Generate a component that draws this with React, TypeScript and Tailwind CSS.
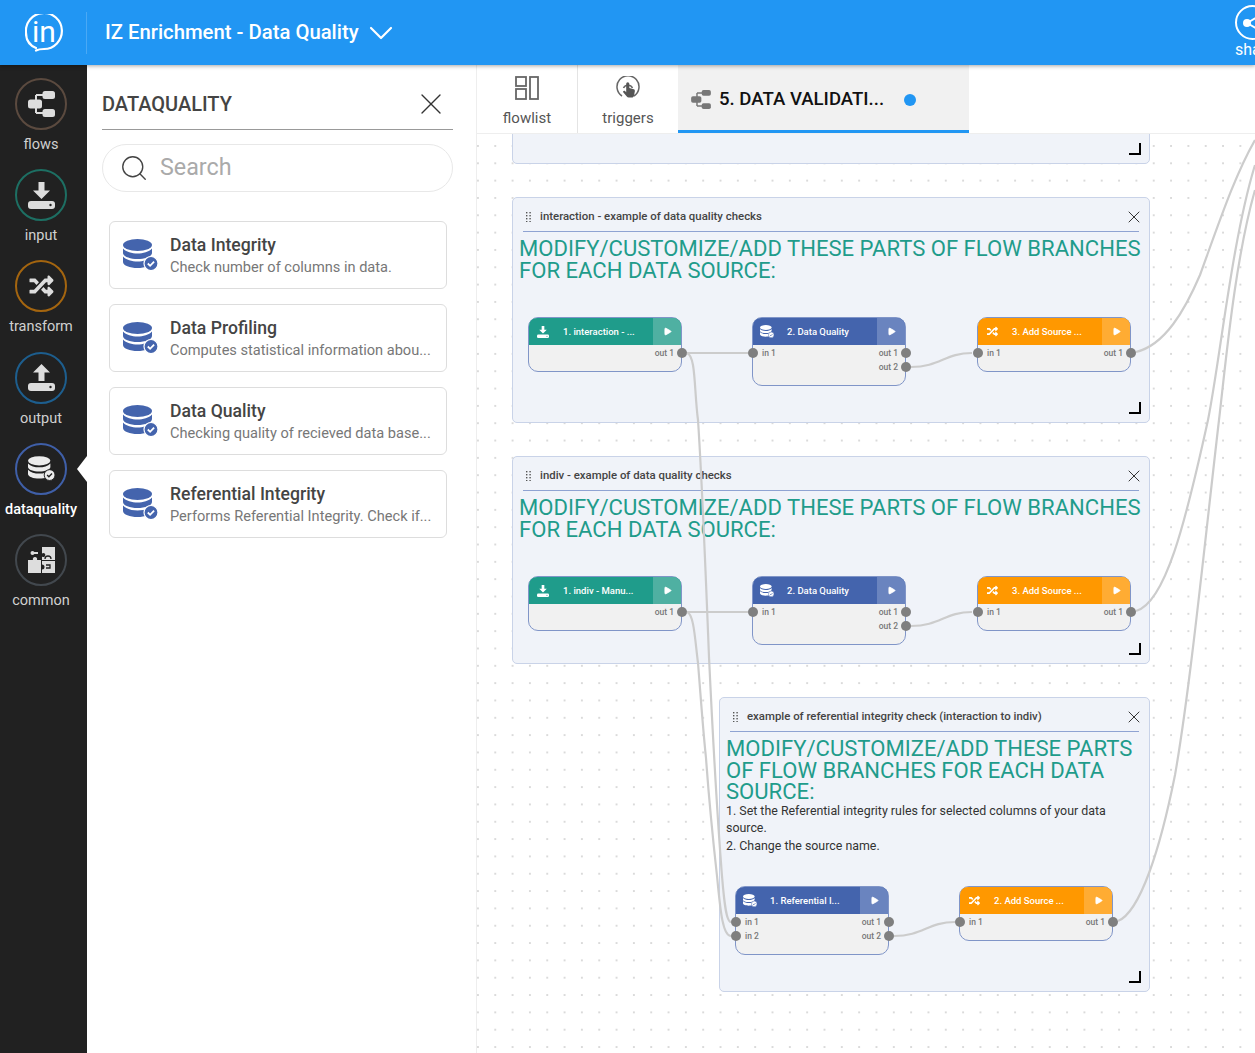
import { ReactNode } from 'react';
import { ChevronDown, Play, Search, X } from 'lucide-react';
import { FaRandom } from 'react-icons/fa';

function FlowIcon({ className, color }: { className: string; color: string }) {
  return (
    <svg viewBox="0 0 27 26" className={className} fill={color}>
      <path d="M8 4h8M8 22h8M8 4v18" stroke={color} strokeWidth="2" fill="none" />
      <rect x="0" y="8.5" width="14" height="9" rx="2.5" />
      <rect x="14.5" y="0" width="12.5" height="8" rx="2.5" />
      <rect x="14.5" y="18" width="12.5" height="8" rx="2.5" />
    </svg>
  );
}

function TransferIcon({ className, color, dark, up }: { className: string; color: string; dark: string; up?: boolean }) {
  return (
    <svg viewBox="0 0 27 27" className={className} fill={color}>
      {up ? <path d="M13.5 0L22 8.5h-5.5V17h-6V8.5H5z" /> : <path d="M10.5 0h6v8.5H22L13.5 17 5 8.5h5.5z" />}
      <rect x="0" y="19" width="27" height="8" rx="3" />
      <circle cx="22.5" cy="23" r="1.2" fill={dark} />
    </svg>
  );
}

function DbIcon({ className, color, ring, tick }: { className: string; color: string; ring: string; tick: string }) {
  return (
    <svg viewBox="0 0 35 32" className={className} fill={color}>
      <ellipse cx="14.5" cy="6" rx="14.5" ry="6" />
      <path d="M0 9.5C3 13 9 14.5 14.5 14.5S26 13 29 9.5V14c0 3.5-7 6-14.5 6S0 17.5 0 14z" />
      <path d="M0 17.5C3 21 9 22.500 14.500 22.500S26 21 29 17.500V23c0 3.500-7 6-14.500 6S0 26.500 0 23z" />
      <circle cx="28" cy="24.500" r="7" stroke={ring} strokeWidth="1.2" />
      <path d="M24.800 24.500l2.300 2.300 4-4.200" stroke={tick} strokeWidth="1.800" fill="none" />
    </svg>
  );
}

function PuzzleIcon({ className }: { className: string }) {
  return (
    <svg viewBox="0 0 27 26" className={className} fill="#dddddd">
      <path d="M14 0h13v13H14V9.500a2 2 0 1 0 0-3z" />
      <path d="M0 13h5a2.200 2.200 0 1 1 4 0h4v13H0z" />
      <path d="M14 14h13v12H14v-3.500a2.200 2.200 0 1 0 0-5z" />
      <path d="M5 6h5" stroke="#dddddd" strokeWidth="2" />
      <circle cx="4.500" cy="6" r="2" />
      <path d="M17 12a3 3 0 0 1 6 0M18 18h4v3h-4" stroke="#212121" strokeWidth="1.300" fill="none" />
    </svg>
  );
}

function DragIcon() {
  return (
    <svg viewBox="0 0 5 10" className="h-[10px] w-[5px] shrink-0" fill="#555555">
      {[0, 3, 6, 9].map((y) => (
        <g key={y}>
          <rect x="0" y={y} width="1.400" height="1.400" />
          <rect x="3.400" y={y} width="1.400" height="1.400" />
        </g>
      ))}
    </svg>
  );
}

const railItems = [
  { label: 'flows', ring: 'border-[#5b4a3f]', icon: <FlowIcon className="h-[26px] w-[27px]" color="#dddddd" /> },
  { label: 'input', ring: 'border-[#1d6f63]', icon: <TransferIcon className="h-[27px] w-[27px]" color="#dddddd" dark="#212121" /> },
  { label: 'transform', ring: 'border-[#a4650f]', icon: <FaRandom className="h-[24px] w-[27px] text-[#dddddd]" /> },
  { label: 'output', ring: 'border-[#1d5e8e]', icon: <TransferIcon className="h-[27px] w-[27px]" color="#dddddd" dark="#212121" up /> },
  { label: 'dataquality', ring: 'border-[#3f5fa8]', active: true, icon: <DbIcon className="h-[25px] w-[27px]" color="#ececec" ring="#212121" tick="#212121" /> },
  { label: 'common', ring: 'border-[#42484e]', icon: <PuzzleIcon className="h-[26px] w-[27px]" /> },
];

const cards = [
  { title: 'Data Integrity', text: 'Check number of columns in data.' },
  { title: 'Data Profiling', text: 'Computes statistical information abou...' },
  { title: 'Data Quality', text: 'Checking quality of recieved data base...' },
  { title: 'Referential Integrity', text: 'Performs Referential Integrity. Check if...' },
];

function Node({
  className,
  head,
  play,
  icon,
  title,
  ins,
  outs,
}: {
  className: string;
  head: string;
  play: string;
  icon: ReactNode;
  title: string;
  ins: string[];
  outs: string[];
}) {
  return (
    <div className={`absolute w-[154px] rounded-[10px] border-[1.5px] border-[#8095c8] bg-[#f1f1f1] ${className}`}>
      <div className={`flex h-[27px] items-center rounded-t-[8px] ${head}`}>
        <div className="flex w-[33px] shrink-0 justify-center pr-[5px]">{icon}</div>
        <span className="flex-1 pt-[1px] pl-[1px] text-[9.500px] font-medium whitespace-nowrap text-white">{title}</span>
        <div className={`flex h-full w-[28px] shrink-0 items-center justify-center rounded-tr-[8px] ${play}`}>
          <Play className="h-[9px] w-[9px] fill-white text-white" />
        </div>
      </div>
      <div className="flex justify-between pt-[1px] pr-[7px] pb-[11px] pl-[9px]">
        <div className="flex flex-col">
          {ins.map((n) => (
            <div key={n} className="relative h-[14px] text-[8.500px] leading-[14px] font-medium text-[#777777]">
              {n}
              <span className="absolute top-[2px] left-[-14px] h-[10px] w-[10px] rounded-full bg-[#7f7f7f]" />
            </div>
          ))}
        </div>
        <div className="flex flex-col">
          {outs.map((n) => (
            <div key={n} className="relative h-[14px] text-[8.500px] leading-[14px] font-medium text-[#777777]">
              {n}
              <span className="absolute top-[2px] right-[-13px] h-[10px] w-[10px] rounded-full bg-[#7f7f7f]" />
            </div>
          ))}
        </div>
      </div>
    </div>
  );
}

function Group({
  className,
  title,
  children,
  body,
}: {
  className: string;
  title?: string;
  children?: ReactNode;
  body?: ReactNode;
}) {
  return (
    <div className={`absolute rounded-[5px] border border-[#c9d3e8] bg-[#f0f3f9] ${className}`}>
      {title && (
        <>
          <div className="mx-[10px] flex h-[34px] items-center gap-[9px] border-b border-[#8fa3d2] pt-[4px] pl-[3px]">
            <DragIcon />
            <span className="flex-1 text-[11.400px] font-medium text-[#444444]">{title}</span>
            <X className="mr-[-5px] h-[20px] w-[20px] text-[#222222]" strokeWidth={1.100} />
          </div>
          <div className="px-[6px] pt-[6px] text-[22.080px] leading-[21.500px] text-[#1f9c8b]">
            MODIFY/CUSTOMIZE/ADD THESE PARTS OF FLOW BRANCHES FOR EACH DATA SOURCE:
          </div>
          {body}
        </>
      )}
      {children}
      <div className="absolute right-[8px] bottom-[8px] h-[12px] w-[12px] border-r-2 border-b-2 border-black" />
    </div>
  );
}

const dlIcon = <TransferIcon className="h-[12px] w-[12px]" color="#ffffff" dark="#1f9c8b" />;
const dbIcon = <DbIcon className="h-[13px] w-[14px]" color="#ffffff" ring="#4464ad" tick="#4464ad" />;
const mixIcon = <FaRandom className="h-[11px] w-[13px] text-white" />;
const teal = { head: 'bg-[#1f9c8b]', play: 'bg-[#4fb0a2]' };
const blue = { head: 'bg-[#4464ad]', play: 'bg-[#6a84bf]' };
const amber = { head: 'bg-[#ff9800]', play: 'bg-[#ffac33]' };

function Wires() {
  return (
    <svg viewBox="477 134 778 919" className="pointer-events-none absolute inset-0 h-[919px] w-[778px]" fill="none" stroke="#cccccc" strokeWidth="2.200">
      <path d="M687 353H748" />
      <path d="M911 367C940 367 945 353 972 353" />
      <path d="M1136 352C1165 345 1185 310 1200 275C1220 220 1235 175 1255 140" />
      <path d="M687 612H748" />
      <path d="M911 626C940 626 945 612 972 612" />
      <path d="M1136 611C1165 603 1185 525 1208 420C1220 360 1232 240 1255 165" />
      <path d="M1118 921C1140 912 1160 850 1175 775C1190 690 1205 540 1219 420C1226 360 1235 260 1255 190" />
      <path d="M894 936C923 936 928 922 955 922" />
      <path d="M687 353C696 356 694 390 698 420C702 480 706 580 709 657C712 720 716 800 722 876C724 900 726 922 731 922" />
      <path d="M687 612C694 614 695 640 698 663C701 700 703 730 706 758C709 800 713 840 717 876C720 905 722 936 731 936" />
    </svg>
  );
}

export default function App() {
  return (
    <div className="flex h-[1053px] w-[1255px] flex-col overflow-hidden bg-white font-['Roboto',sans-serif]">
      <header className="relative z-10 flex h-[65px] shrink-0 items-center bg-[#2196f3] shadow-[0_1px_4px_rgba(0,0,0,0.35)]">
        <div className="relative ml-[25px] flex h-[38px] w-[38px] items-center justify-center">
          <svg viewBox="0 0 38 38" className="absolute inset-0 h-[38px] w-[38px]" fill="none" stroke="#ffffff" strokeWidth="2.200">
            <path d="M11 34C4 31 1 25 1 19a18 18 0 1 1 18 16c-2 0-5 0-8 1.500" strokeLinecap="round" />
          </svg>
          <span className="pb-[2px] text-[30px] leading-none text-white">in</span>
        </div>
        <div className="ml-[23px] h-[42px] w-px bg-[#4aa9f5]" />
        <h1 className="ml-[18px] text-[20.300px] font-medium text-white">IZ Enrichment - Data Quality</h1>
        <ChevronDown className="ml-[2px] h-[40px] w-[40px] text-white" strokeWidth={1.300} />
        <div className="absolute top-[5px] left-[1235px] flex w-[50px] flex-col items-start">
          <div className="flex h-[35px] w-[35px] items-center justify-center rounded-full border-2 border-white">
            <svg viewBox="0 0 24 24" className="h-[24px] w-[24px]" fill="#ffffff" stroke="#ffffff" strokeWidth="2">
              <circle cx="6" cy="12" r="3" />
              <circle cx="18" cy="5" r="3" />
              <circle cx="18" cy="19" r="3" />
              <path d="M6 12L18 5M6 12l12 7" />
            </svg>
          </div>
          <span className="text-[16px] leading-[20px] text-white">share</span>
        </div>
      </header>

      <div className="flex min-h-0 flex-1">
        <nav className="flex w-[87px] shrink-0 flex-col items-center bg-[#212121] pt-[13px]">
          {railItems.map((item) => (
            <div key={item.label} className="relative flex h-[91.200px] w-full shrink-0 flex-col items-center pr-[5px]">
              <div className={`flex h-[52px] w-[52px] items-center justify-center rounded-full border-2 ${item.ring}`}>{item.icon}</div>
              <span className={item.active ? 'mt-[4px] text-[14.500px] leading-[21px] font-medium text-white' : 'mt-[4px] text-[14.500px] leading-[21px] text-[#d0d0d0]'}>
                {item.label}
              </span>
              {item.active && (
                <span className="absolute top-[13px] right-0 h-0 w-0 border-y-[13px] border-r-[10px] border-y-transparent border-r-white" />
              )}
            </div>
          ))}
        </nav>

        <aside className="flex w-[390px] shrink-0 flex-col border-r border-[#eeeeee] bg-white">
          <div className="mr-[23px] ml-[15px] flex h-[65px] items-center justify-between border-b border-[#999999] pt-[14px] pr-[4px]">
            <h2 className="text-[20px] font-medium text-[#444444]">DATAQUALITY</h2>
            <X className="h-[36px] w-[36px] text-[#333333]" strokeWidth={0.900} />
          </div>
          <div className="mt-[14px] mr-[23px] ml-[15px] flex h-[48px] items-center rounded-full border border-[#e8e8e8] pl-[16px]">
            <Search className="h-[30px] w-[30px] text-[#444444]" strokeWidth={1.100} />
            <span className="ml-[11px] pb-[1px] text-[23.300px] text-[#aaaaaa]">Search</span>
          </div>
          <div className="mx-[22px] mt-[29px] flex w-[338px] flex-col gap-[15px]">
            {cards.map((card) => (
              <div key={card.title} className="flex h-[68px] items-center rounded-[6px] border border-[#dddddd] pl-[13px]">
                <DbIcon className="h-[32px] w-[35px] shrink-0" color="#4464ad" ring="#ffffff" tick="#ffffff" />
                <div className="ml-[12px] min-w-0">
                  <div className="text-[17.600px] leading-[24px] font-medium text-[#444444]">{card.title}</div>
                  <div className="text-[14.600px] leading-[20px] whitespace-nowrap text-[#777777]">{card.text}</div>
                </div>
              </div>
            ))}
          </div>
        </aside>

        <main className="flex min-w-0 flex-1 flex-col">
          <div className="flex h-[69px] shrink-0 border-b border-[#eeeeee] bg-white">
            <div className="flex w-[101px] flex-col items-center border-r border-[#e4e4e4] pt-[11px]">
              <svg viewBox="0 0 24 24" className="h-[24px] w-[24px]" fill="none" stroke="#666666" strokeWidth="1.800">
                <rect x="1" y="1" width="10" height="9" />
                <rect x="1" y="13" width="10" height="10" />
                <rect x="15" y="1" width="8" height="22" />
              </svg>
              <span className="mt-[7px] text-[15px] leading-[22px] text-[#555555]">flowlist</span>
            </div>
            <div className="flex w-[100px] flex-col items-center pt-[11px]">
              <svg viewBox="0 0 24 24" className="h-[24px] w-[24px]" fill="none" stroke="#666666" strokeWidth="1.500">
                <path d="M6 20A11 11 0 1 1 18 20" />
                <path d="M7.500 12a5 5 0 0 1 9 0" />
                <g transform="translate(-2.400 -2.400) scale(1.200)">
                  <path d="M10.500 8.500a1.300 1.300 0 0 1 2.600 0V12l3.700 1c.8.300 1 1 .9 1.800l-.7 3.700c-.2.900-.9 1.500-1.800 1.500h-2.600c-.7 0-1.200-.3-1.600-.9L8 15.500c-.5-.9.700-1.800 1.500-1l1 1z" fill="#555555" stroke="none" />
                </g>
              </svg>
              <span className="mt-[7px] text-[15px] leading-[22px] text-[#555555]">triggers</span>
            </div>
            <div className="flex w-[291px] items-center border-b-[3px] border-[#2196f3] bg-[#f1f1f1] pt-[4px] pl-[13px]">
              <FlowIcon className="h-[19px] w-[20px]" color="#777777" />
              <span className="ml-[8px] text-[18.600px] font-medium text-[#111111]">5. DATA VALIDATI...</span>
              <span className="ml-[20px] h-[12px] w-[12px] rounded-full bg-[#2196f3]" />
            </div>
          </div>

          <div className="relative flex-1 overflow-hidden bg-white bg-[radial-gradient(circle,#cccccc_0.6px,transparent_0.9px)] bg-[length:17.330px_17.330px] bg-[position:9.600px_3.300px]">
            <Group className="top-[-100px] left-[35px] h-[130px] w-[638px]" />
            <Group className="top-[63px] left-[35px] h-[226px] w-[638px]" title="interaction - example of data quality checks">
              <Node className="top-[119px] left-[15px]" {...teal} icon={dlIcon} title="1. interaction - ..." ins={[]} outs={['out 1']} />
              <Node className="top-[119px] left-[239px]" {...blue} icon={dbIcon} title="2. Data Quality" ins={['in 1']} outs={['out 1', 'out 2']} />
              <Node className="top-[119px] left-[464px]" {...amber} icon={mixIcon} title="3. Add Source ..." ins={['in 1']} outs={['out 1']} />
            </Group>
            <Group className="top-[322px] left-[35px] h-[208px] w-[638px]" title="indiv - example of data quality checks">
              <Node className="top-[119px] left-[15px]" {...teal} icon={dlIcon} title="1. indiv - Manu..." ins={[]} outs={['out 1']} />
              <Node className="top-[119px] left-[239px]" {...blue} icon={dbIcon} title="2. Data Quality" ins={['in 1']} outs={['out 1', 'out 2']} />
              <Node className="top-[119px] left-[464px]" {...amber} icon={mixIcon} title="3. Add Source ..." ins={['in 1']} outs={['out 1']} />
            </Group>
            <Group
              className="top-[563px] left-[242px] h-[295px] w-[431px]"
              title="example of referential integrity check (interaction to indiv)"
              body={
                <div className="mt-[-1px] px-[6px] text-[12.400px] leading-[17.500px] text-[#333333]">
                  <p>1. Set the Referential integrity rules for selected columns of your data source.</p>
                  <p>2. Change the source name.</p>
                </div>
              }
            >
              <Node className="top-[188px] left-[15px]" {...blue} icon={dbIcon} title="1. Referential I..." ins={['in 1', 'in 2']} outs={['out 1', 'out 2']} />
              <Node className="top-[188px] left-[239px]" {...amber} icon={mixIcon} title="2. Add Source ..." ins={['in 1']} outs={['out 1']} />
            </Group>
            <Wires />
          </div>
        </main>
      </div>
    </div>
  );
}
